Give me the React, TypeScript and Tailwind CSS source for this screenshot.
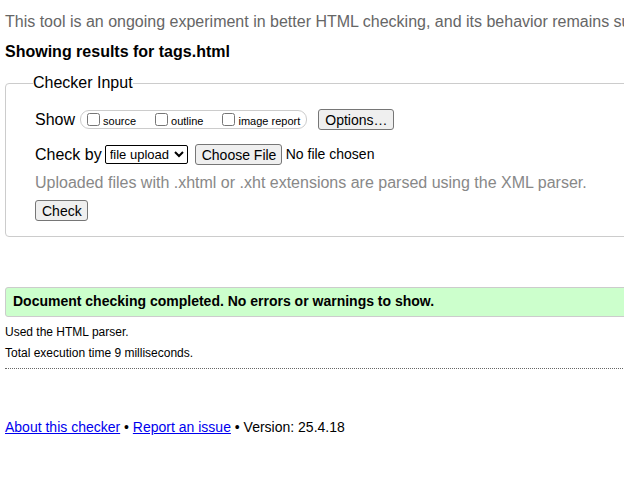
import React from 'react';

const Checkbox: React.FC<{ label: string }> = ({ label }) => (
    <label className="flex items-center">
        <input type="checkbox" className="m-0 mr-[3px] w-[13px] h-[13px]" />
        <span className="text-[11px] mt-[3px]">{label}</span>
    </label>
);

const Btn: React.FC<{ children: React.ReactNode; className?: string }> = ({ children, className }) => (
    <button className={`bg-[#efefef] border border-[#767676] rounded-[3px] px-[6px] h-[21px] text-[14px] leading-none text-black whitespace-nowrap ${className || ''}`}>
        {children}
    </button>
);

const App: React.FC = () => {
    return (
        <div className="w-[624px] h-[501px] overflow-hidden bg-white text-black" style={{ fontFamily: '"Liberation Sans", Arial, sans-serif' }}>
            <div className="w-[900px] pl-[5px]">
                <p className="text-[16px] text-[#666] leading-[18px] mt-[13px] whitespace-nowrap">
                    This tool is an ongoing experiment in better HTML checking, and its behavior remains subject to change
                </p>
                <h2 className="font-bold text-[16px] leading-[18px] mt-[12px]">Showing results for tags.html</h2>

                <fieldset className="mt-[13px] w-[800px] border border-[#ccc] rounded-[4px] pl-[27px] pb-[13px]">
                    <legend className="px-0 text-[16px] leading-[18px]">Checker Input</legend>
                    <div className="ml-[2px]">
                        <div className="flex items-center mt-[17px] h-[21px]">
                            <span className="text-[16px] mr-[5px]">Show</span>
                            <div className="flex items-center gap-[19px] border border-[#ccc] rounded-[9px] h-[19px] pl-[6px] pr-[6px]">
                                <Checkbox label="source" />
                                <Checkbox label="outline" />
                                <Checkbox label="image report" />
                            </div>
                            <Btn className="ml-[11px] w-[76px]">Options…</Btn>
                        </div>
                        <div className="flex items-center mt-[14px] h-[21px]">
                            <span className="text-[16px] mr-[3px]">Check by</span>
                            <select className="border border-[#000] rounded-[2px] text-[13px] h-[19px] w-[83px] px-0">
                                <option>file upload</option>
                            </select>
                            <Btn className="ml-[7px] w-[87px]">Choose File</Btn>
                            <span className="text-[14px] ml-[4px]">No file chosen</span>
                        </div>
                        <p className="text-[16px] text-[#888] leading-[18px] mt-[9px]">
                            Uploaded files with .xhtml or .xht extensions are parsed using the XML parser.
                        </p>
                        <Btn className="mt-[8px] w-[53px]">Check</Btn>
                    </div>
                </fieldset>

                <div className="mt-[50px] w-[800px] h-[30px] bg-[#ccffcc] border border-[#ccc] rounded-[3px] flex items-center pl-[7px]">
                    <span className="font-bold text-[14px]">Document checking completed. No errors or warnings to show.</span>
                </div>
                <p className="text-[12px] leading-[14px] mt-[8px]">Used the HTML parser.</p>
                <p className="text-[12px] leading-[14px] mt-[7px]">Total execution time 9 milliseconds.</p>
                <hr className="mt-[8px] w-[800px] border-0 border-t border-dotted border-[#666]" />

                <p className="text-[14px] leading-[16px] mt-[50px]">
                    <a href="#" className="text-[#0000ee] underline">About this checker</a>
                    {' • '}
                    <a href="#" className="text-[#0000ee] underline">Report an issue</a>
                    {' • Version: 25.4.18'}
                </p>
            </div>
        </div>
    );
};

export default App;
